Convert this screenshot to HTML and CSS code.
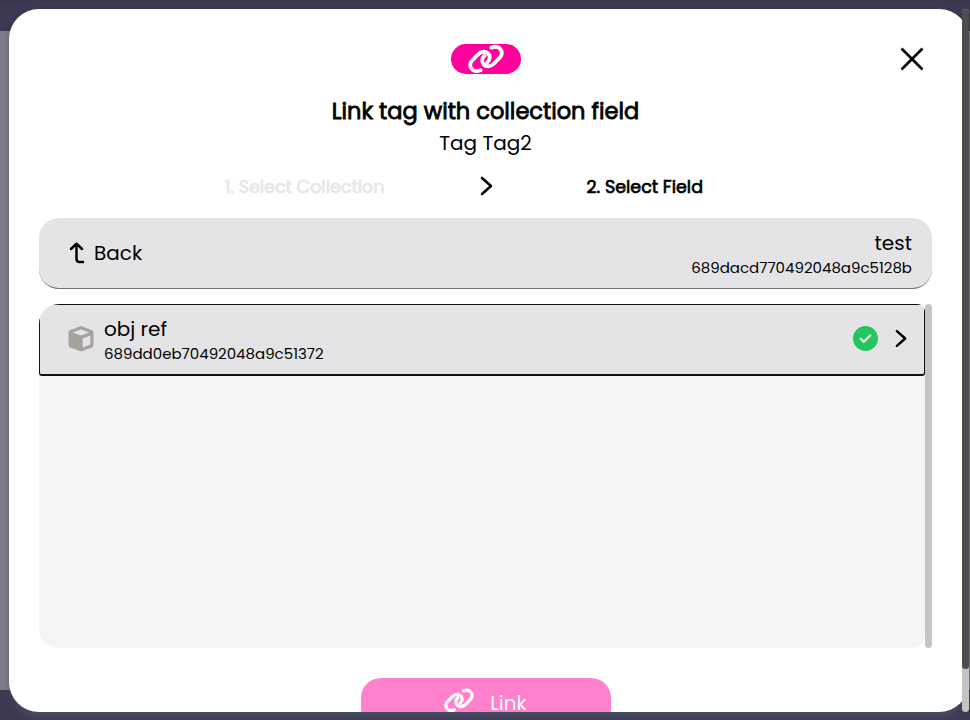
FILE: index.html
```html
<!DOCTYPE html>
<html lang="en">
<head>
<meta charset="utf-8">
<title>Link tag with collection field</title>
<link rel="stylesheet" href="styles.css">
</head>
<body>
<svg class="defs" aria-hidden="true">
  <symbol id="chain" viewBox="0 0 36 30">
    <g fill="none" stroke="currentColor" stroke-width="3.9" stroke-linecap="round">
      <path d="M12.500 26.200C9.500 27.500 6.300 27.400 4.100 25.400C1.500 23 1.600 19.200 4.200 16.400L10.500 10C13.500 7 18 7 20.300 9.600C22.400 12 22.200 15.800 19.400 18.200"/>
      <path d="M23.500 3.600C26.500 2.300 29.700 2.500 31.900 4.600C34.500 7 34.400 10.800 31.800 13.600L25.500 20C22.500 23 18 23 15.700 20.400C13.600 18 13.800 14.200 16.400 11.800"/>
    </g>
  </symbol>
  <symbol id="chevron" viewBox="0 0 14 20">
    <path d="M2 2L11 10L2 18" fill="none" stroke="currentColor" stroke-width="2.6" stroke-linecap="round" stroke-linejoin="round"/>
  </symbol>
</svg>
<div class="page">
  <div class="shade"></div>
  <main class="dialog">
    <div class="content">
      <header class="header">
        <span class="badge"><svg class="badge-icon"><use href="#chain"/></svg></span>
        <h1 class="title">Link tag with collection field</h1>
        <p class="subtitle">Tag Tag2</p>
        <svg class="close" viewBox="0 0 24 24"><path d="M1.500 1.500L22.500 22.500M22.500 1.500L1.500 22.500" stroke="#000" stroke-width="2.6"/></svg>
      </header>
      <div class="steps">
        <span class="step muted">1. Select Collection</span>
        <svg class="step-arrow"><use href="#chevron"/></svg>
        <span class="step">2. Select Field</span>
      </div>
      <div class="back">
        <svg class="up" viewBox="0 0 16 22"><path d="M2 7L7.500 1.700L13 7M7.500 2V17Q7.500 20 10.500 20H14" fill="none" stroke="#000" stroke-width="2.5" stroke-linecap="round" stroke-linejoin="round"/></svg>
        <span class="label">Back</span>
        <div class="parent">
          <span class="label">test</span>
          <span class="id">689dacd770492048a9c5128b</span>
        </div>
      </div>
      <div class="list-area">
        <div class="list">
          <div class="item">
            <svg class="cube" viewBox="0 0 26 26"><path fill="#a8a29e" fill-rule="evenodd" d="M11.700.4Q13 0 14.300.4L23.800 3.900Q25.500 4.600 25.500 6.500V18.800Q25.500 20.800 23.800 21.500L14.300 25.100Q13 25.600 11.700 25.100L2.200 21.500Q.5 20.800.5 18.800V6.500Q.5 4.600 2.200 3.900ZM13 3.500L4.800 6.500L13 9.500L21.200 6.500ZM14.700 12.500V21.400L22.300 18.600V9.600Z"/></svg>
            <div class="field">
              <span class="label">obj ref</span>
              <span class="id">689dd0eb70492048a9c51372</span>
            </div>
            <svg class="check" viewBox="0 0 26 26"><circle cx="13" cy="13" r="13" fill="#22c55e"/><path d="M8 13.300L11.300 16.500L18 9.800" fill="none" stroke="#e4e4e7" stroke-width="2.500" stroke-linecap="round" stroke-linejoin="round"/></svg>
            <svg class="item-arrow"><use href="#chevron"/></svg>
          </div>
        </div>
        <div class="list-bar"></div>
      </div>
      <div class="submit"><svg class="submit-icon"><use href="#chain"/></svg><span class="label">Link</span></div>
    </div>
  </main>
  <div class="scrollbar"><div class="thumb"></div></div>
</div>
</body>
</html>
```
FILE: styles.css
```css
* { box-sizing: border-box; }
body { margin: 0; font-family: Poppins, Inter, "Open Sans", sans-serif; color: #000; }
.defs { position: absolute; width: 0; height: 0; }
svg { display: block; flex: none; }
.page { position: relative; width: 970px; height: 720px; overflow: hidden; padding: 9px 0 0 9px; background: linear-gradient(#3a334b 0, #3f3853 4px, #3f3853 31px, #7f7b8a 31px, #7f7b8a 690px, #3f3853 690px); }
.shade { position: absolute; left: 9px; top: 9px; width: 960px; height: 703px; border-radius: 30px; box-shadow: 0 8px 10px -4px #52687599, 0 0 5px #2d294055; }
.dialog { position: relative; width: 960px; height: 703px; border-radius: 30px; overflow: hidden; }
.content { width: 953px; height: 703px; background: #fff; padding: 35px 30px 0; overflow: hidden; }
.header { position: relative; display: flex; flex-direction: column; align-items: center; height: 118px; }
.badge { display: flex; justify-content: center; align-items: center; width: 70px; height: 30px; border-radius: 15px; background: #ff009d; color: #fff; }
.badge-icon { width: 36px; height: 30px; }
.title { margin: 20px 0 0; height: 35px; line-height: 35px; font-size: 22.5px; font-weight: 400; -webkit-text-stroke: 0.8px currentColor; white-space: nowrap; }
.subtitle { margin: 0; height: 28px; line-height: 28px; font-size: 20px; }
.close { position: absolute; right: 8px; top: 3px; width: 24px; height: 24px; }
.steps { display: grid; grid-template-columns: 1fr 14px 1fr; align-items: center; height: 50px; margin-bottom: 6px; column-gap: 94px; }
.step { font-size: 17.5px; font-weight: 400; -webkit-text-stroke: 0.7px currentColor; white-space: nowrap; }
.muted { color: #e5e7eb; text-align: right; }
.step-arrow { width: 14px; height: 20px; margin: -2px 0 0 1px; }
.back { display: flex; align-items: center; height: 71px; border-radius: 20px; border-bottom: 1px solid #71717a; background: #e4e4e7; padding: 0 20px 0 30px; }
.up { width: 16px; height: 22px; margin-right: 9px; }
.label { font-size: 20px; line-height: 28px; }
.id { font-size: 15px; line-height: 22px; }
.parent { margin-left: auto; padding-top: 2px; display: flex; flex-direction: column; align-items: flex-end; }
.list-area { display: flex; height: 344px; margin-top: 15px; }
.list { width: 886px; height: 344px; background: #f4f4f4; border-radius: 20px 8px 14px 20px; overflow: hidden; }
.item { display: flex; align-items: center; height: 72px; background: #e4e4e7; border: 1px solid #111; border-bottom-width: 2px; border-radius: 3px; padding: 0 16px 0 28px; }
.cube { width: 26px; height: 26px; margin: -2px 10px 0 0; }
.field { display: flex; flex-direction: column; align-items: flex-start; }
.check { width: 25px; height: 25px; margin: -2px 17px 0 auto; }
.item-arrow { width: 13px; height: 19px; margin-top: -2px; }
.list-bar { width: 7px; background: #c4c4c4; border-radius: 4px; }
.submit { display: flex; justify-content: center; align-items: center; width: 250px; height: 50px; margin: 30px auto 0; border-radius: 20px; background: #ff80cc; color: #fff; gap: 16px; }
.submit-icon { width: 30px; height: 25px; margin-top: -5px; }
.scrollbar { position: absolute; left: 962px; top: 9px; width: 7px; height: 703px; border-radius: 4px; background: #c4c4c4; }
.thumb { height: 660px; border-radius: 4px; background: #4d4d4d; }
```
